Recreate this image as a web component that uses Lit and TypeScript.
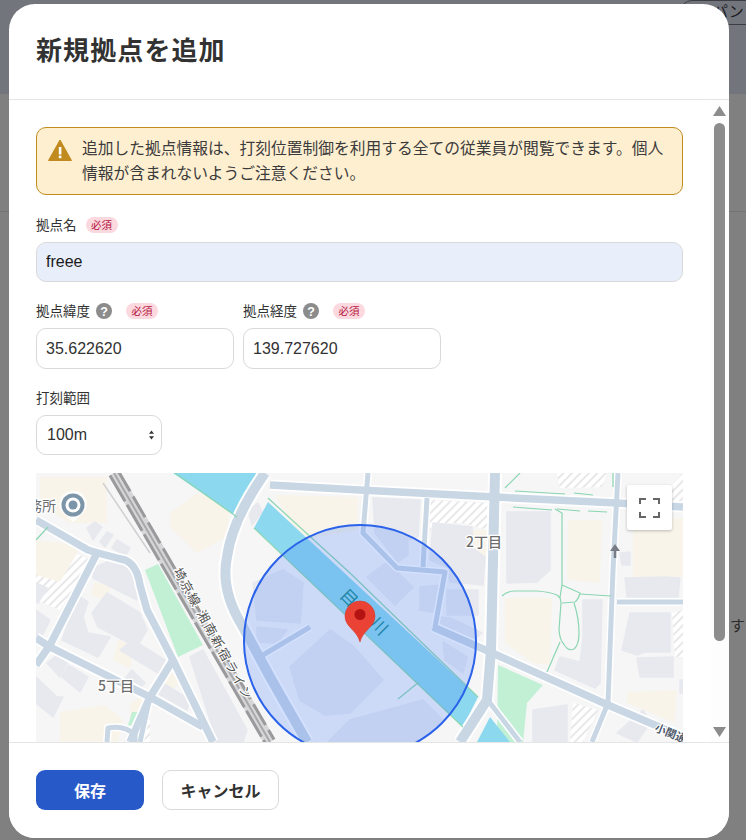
import { LitElement, html, svg, css } from "lit";
import { customElement } from "lit/decorators.js";

const yellow = [
  "40,477 107,477 107,523 70,523 40,505",
  "170,513 197,493 230,503 227,537 197,553 170,527",
  "36,540 82,545 60,582 36,575",
  "60,712 105,705 123,720 118,742 60,742",
  "275,495 358,497 358,530 300,540",
  "568,520 602,520 600,583 567,580",
  "505,598 552,598 550,665 533,663 505,643",
  "633,520 683,518 683,577 633,577",
  "627,692 677,690 675,723 627,703",
  "95,582 112,587 105,600 90,595",
  "118,640 135,645 130,668 113,660",
  "166,665 180,680 170,695 160,680",
  "130,702 147,695 147,712 130,725",
  "470,530 488,530 488,560 470,555",
];
const buildings = [
  "93,568 112,560 135,570 137,600 93,578",
  "92,613 107,593 140,613 147,630 137,647 98,627",
  "62,640 78,595 88,602 83,617 88,633 110,637 98,657",
  "120,650 133,640 165,660 158,673",
  "47,663 57,655 67,663 60,677",
  "62,677 68,665 88,677 80,692",
  "125,678 132,670 145,683 137,692",
  "157,693 163,683 190,700 187,710",
  "36,677 57,697 63,697 53,717 36,703",
  "190,657 203,650 247,730 243,742 217,742",
  "36,610 50,620 40,640 36,637",
  "36,583 47,588 38,603 36,602",
  "87,528 95,522 102,527 93,540",
  "100,542 107,532 113,535 105,547",
  "112,548 117,540 130,548 125,557",
  "248,510 258,503 262,512 252,525",
  "253,583 283,570 303,583 300,623 257,620",
  "257,627 287,630 277,643 257,642",
  "290,667 330,630 352,645 383,680 350,713 325,715 300,700",
  "328,742 350,720 423,700 443,720 417,742",
  "367,577 387,562 413,587 395,605",
  "373,498 420,500 418,537 408,540 408,555 398,562 383,543 375,533",
  "433,523 472,527 473,548 485,557 483,585 450,582 447,567 430,560",
  "447,590 478,590 478,615 447,615",
  "420,587 442,585 437,613 420,610",
  "437,623 438,617 450,618 482,633 470,643",
  "443,642 467,657 463,673 445,660",
  "507,512 550,512 550,570 537,582 507,583",
  "583,600 602,600 600,683 595,688 555,670 560,657 580,662 583,637",
  "630,613 670,613 670,652 645,652 637,655 622,650",
  "637,658 673,657 673,677 640,677",
  "625,578 665,577 680,578 678,597 627,597",
  "620,553 630,552 630,565 622,565",
  "533,710 567,705 567,742 533,742",
  "617,733 643,710 650,723 637,742",
  "680,680 683,680 683,693 680,693",
];
const hatch = [
  "430,500 488,503 488,530 463,523 433,523 430,533",
  "557,473 607,473 602,487 560,488",
  "36,573 50,565 65,548 90,560 60,610 36,600",
  "573,703 598,710 583,742 570,742",
  "130,720 150,710 150,742 130,742",
  "672,613 683,610 683,657 675,657",
  "670,487 683,473 683,503 672,503",
];
const wideRoads = [
  "M265,473 Q232,520 227,557 Q220,590 243,627 L270,677 L307,742",
  "M495,473 L491,650 L487,700 L460,742",
];
const roads = [
  "M270,485 L360,490 L495,497 L617,503 L683,507",
  "M36,520 L88,550 Q97,553 125,560 Q137,565 140,585 L147,610 L173,660 L213,742",
  "M97,553 L50,645 L36,665",
  "M36,638 L50,647 L150,697 L203,727",
  "M173,660 L150,697 L130,742",
  "M433,627 L490,652 L608,705 L683,737",
];
const thinRoads = [
  "M618,473 L613,570 L608,703 L592,742",
  "M368,473 L363,533 L397,568 L445,572 L435,627",
  "M427,498 L423,567",
  "M617,602 L683,602",
  "M490,703 L520,742",
  "M263,655 L310,627",
  "M107,742 L108,728 Q125,725 135,735 L135,742",
  "M150,697 L140,742",
];
const greens = [
  "M505,488 L520,473",
  "M515,491 L565,494 M574,493 L593,495",
  "M513,507 L552,510 M557,509 L580,511 M588,511 L607,512",
  "M555,509 L562,513 L562,585 L560,597 L561,603 L559,630 Q560,640 563,643 Q568,652 574,649 Q579,645 579,633 Q579,618 574,603",
  "M502,596 Q507,591 515,591 L537,591 Q550,592 557,595 L560,598",
  "M562,585 L580,593 Q578,600 575,602 L562,603",
  "M580,594 L611,596",
  "M560,642 L547,672",
  "M350,573 L478,697",
  "M254,528 L463,727",
  "M419,682 L398,699",
  "M175,473 L237,517",
  "M268,498 L350,573",
  "M36,540 L48,527",
  "M613,473 L613,487",
];

@customElement("app-root")
export class AppRoot extends LitElement {
  static styles = css`
    :host {
      display: block;
      position: relative;
      width: 746px;
      height: 840px;
      overflow: hidden;
      background: #808080;
      font-family: "Noto Sans CJK JP", "Liberation Sans", sans-serif;
      color: #323232;
    }
    .bar { height: 94px; background: #73757d; position: relative; }
    .pill {
      position: absolute; right: -30px; top: 0; width: 96px; height: 25px;
      border: 1px solid #3c3d42; border-radius: 12px; box-sizing: border-box;
      font-size: 15px; line-height: 20px; color: #1c1c1e; padding-left: 32px;
      white-space: nowrap;
    }
    .rule { height: 1px; margin-top: 117px; background: #747474; }
    .peek { position: absolute; left: 730px; top: 614px; font-size: 15px; line-height: 22px; color: #2c2c2c; }
    .dialog {
      position: absolute; left: 9px; top: 4px; width: 720px; height: 834px;
      background: #fff; border-radius: 26px; overflow: hidden;
      display: flex; flex-direction: column;
    }
    header {
      height: 95px; flex: none;
      border-bottom: 1px solid #e5e5e5;
      display: flex; align-items: center; padding: 0 27px;
    }
    h1 { margin: 0 0 6px; font-size: 26px; line-height: 36px; font-weight: 700; color: #323232; letter-spacing: 1.1px; }
    .body { flex: 1; min-height: 0; display: flex; }
    .scroll {
      flex: 1; min-width: 0; overflow: hidden;
      padding: 27px 28px 0 27px; display: flex; flex-direction: column;
    }
    .alert {
      flex: none; box-sizing: border-box; height: 68px; background: #ffefd1;
      border: 1px solid #c28b1d; border-radius: 10px;
      display: flex; gap: 10px; padding: 7px 16px 0 11px;
      font-size: 15.75px; line-height: 25px; color: #3b3b3b;
    }
    .alert svg { flex: none; width: 24px; height: 24px; margin-top: 3px; }
    .field { display: flex; flex-direction: column; }
    .label {
      display: flex; align-items: center; box-sizing: border-box; height: 20px; padding-bottom: 2px; margin-bottom: 7px;
      font-size: 13.5px; line-height: 18px; color: #323232;
    }
    .help { width: 16px; height: 16px; margin: 2px 14px 0 6px; flex: none; }
    .req {
      display: inline-block; height: 16px; line-height: 16px; width: 32px; text-align: center; margin-top: 2px;
      border-radius: 8px; background: #fcd8df; color: #b5153e; font-size: 10.5px;
    }
    .label > span.name + .req { margin-left: 9px; }
    .name-field { margin-top: 20px; }
    .row { display: flex; gap: 9px; margin-top: 19px; }
    .range { margin-top: 19px; }
    input, .select {
      box-sizing: border-box; border: 1px solid #d9d9d9; border-radius: 10px;
      font: 16px "Liberation Sans", sans-serif; color: #323232; padding: 0 9px;
      background: #fff; outline: none;
    }
    input.wide { width: 100%; height: 40px; background: #e8effb; color: #1a1a1a; }
    input.num { width: 198px; height: 41px; }
    .select {
      width: 126px; height: 40px; display: flex; align-items: center; justify-content: space-between;
      padding: 0 7px 0 10px;
    }
    .select svg { width: 5px; height: 10px; }
    .map { flex: none; width: 647px; height: 269px; margin-top: 18px; position: relative; overflow: hidden; }
    .map svg.canvas { display: block; width: 647px; height: 269px; }
    .map text { font-family: "Noto Sans CJK JP", sans-serif; }
    .fs {
      position: absolute; left: 591px; top: 12px; width: 45px; height: 45px; background: #fff;
      border-radius: 2px; box-shadow: 0 1px 3px rgba(0,0,0,.25);
      display: flex; align-items: center; justify-content: center;
    }
    .fs svg { width: 21px; height: 20px; }
    .sb {
      flex: none; width: 18px; background: #fdfdfd; display: flex; flex-direction: column; align-items: flex-start;
      padding: 6px 0 0 2px; box-sizing: border-box;
    }
    .sb svg { width: 13px; height: 10px; flex: none; }
    .thumb { width: 11px; height: 518px; flex: none; margin: 7px 0 0 1px; border-radius: 6px; background: #8c8c8c; }
    .sb .down { margin-top: 86px; }
    footer {
      height: 96px; flex: none; box-sizing: border-box; border-top: 1px solid #e5e5e5;
      display: flex; gap: 18px; padding: 27px 27px 0;
      background: #fff;
    }
    button {
      height: 40px; border-radius: 9px; font: 700 16px "Noto Sans CJK JP", sans-serif; box-sizing: border-box; padding: 0;
    }
    .primary { width: 108px; background: #2859c9; color: #fff; border: none; }
    .secondary { width: 117px; background: #fff; color: #323232; border: 1px solid #d9d9d9; }
  `;

  private help() {
    return html`<svg class="help" viewBox="0 0 16 16"><circle cx="8" cy="8" r="8" fill="#8c8c8c"/><text x="8" y="12.5" text-anchor="middle" font-size="12.5" font-weight="700" fill="#fff" font-family="Liberation Sans">?</text></svg>`;
  }

  private mapCanvas() {
    return html`<svg class="canvas" viewBox="36 473 647 269">
      <defs>
        <pattern id="h" width="6" height="6" patternUnits="userSpaceOnUse" patternTransform="rotate(-45)">
          <rect width="6" height="6" fill="#fff"/><rect width="6" height="2" fill="#e8e8ea"/>
        </pattern>
      </defs>
      <rect x="36" y="473" width="647" height="269" fill="#f6f6f7"/>
      ${hatch.map((p) => svg`<polygon points=${p} fill="url(#h)"/>`)}
      ${yellow.map((p) => svg`<polygon points=${p} fill="#f8f4ea"/>`)}
      ${buildings.map((p) => svg`<polygon points=${p} fill="#e8e9ef" stroke="#e8e9ef" stroke-linejoin="round" stroke-width="1.5"/>`)}
      <polygon points="145,570 158,564 203,645 178,657" fill="#c2f0d4"/>
      <polygon points="498,665 543,685 527,703 523,742 497,742" fill="#c2f0d4"/>
      <polygon points="132,712 140,712 135,727 128,725" fill="#c2f0d4"/>
      <polygon points="230,473 257,473 253,488" fill="#a6e6c2"/>
      <polygon points="173,473 256,473 237,517" fill="#8cd9ef"/>
      <polygon points="268,502 478,697 463,727 254,528" fill="#8cd9ef"/>
      <polygon points="490,717 510,742 477,742" fill="#8cd9ef"/>
      ${wideRoads.map((d) => svg`<path d=${d} fill="none" stroke="#fff" stroke-width="14" stroke-linejoin="round"/>`)}
      ${roads.map((d) => svg`<path d=${d} fill="none" stroke="#fff" stroke-width="11" stroke-linejoin="round"/>`)}
      ${thinRoads.map((d) => svg`<path d=${d} fill="none" stroke="#fff" stroke-width="8" stroke-linejoin="round"/>`)}
      ${wideRoads.map((d) => svg`<path d=${d} fill="none" stroke="#c9d7e5" stroke-width="10" stroke-linejoin="round"/>`)}
      ${roads.map((d) => svg`<path d=${d} fill="none" stroke="#c9d7e5" stroke-width="7.5" stroke-linejoin="round"/>`)}
      ${thinRoads.map((d) => svg`<path d=${d} fill="none" stroke="#c9d7e5" stroke-width="5" stroke-linejoin="round"/>`)}
      <path d="M103,483 L150,553" stroke="#d0d0d3" stroke-width="1.5" fill="none"/>
      ${greens.map((d) => svg`<path d=${d} fill="none" stroke="#8ad6b1" stroke-width="1.2"/>`)}
      <path d="M114,473 L270,742" stroke="#d6d6d8" stroke-width="12" fill="none"/>
      <path d="M114,473 L270,742" stroke="#9a9a9c" stroke-width="3" stroke-dasharray="30 4" fill="none" transform="translate(-4,2.4)"/>
      <path d="M114,473 L270,742" stroke="#a8a8aa" stroke-width="2" fill="none"/>
      <path d="M114,473 L270,742" stroke="#9a9a9c" stroke-width="3" stroke-dasharray="24 6" fill="none" transform="translate(4,-2.4)"/>
      <path d="M615,558 V549" stroke="#787d85" stroke-width="2.5" fill="none"/>
      <polygon points="615,544 620,551 610,551" fill="#787d85"/>
      <g font-size="12.5" fill="#4f4f4f" stroke="#fff" stroke-width="2.5" paint-order="stroke">
        <text transform="translate(173,571) rotate(61)" letter-spacing="2">埼京線 湘南新宿ライン</text>
      </g>
      <g font-size="14" font-weight="500" fill="#6e6e6e" stroke="#fff" stroke-width="2.5" paint-order="stroke">
        <text x="466" y="547">2丁目</text>
        <text x="98" y="691">5丁目</text>
        <text x="14" y="511" font-weight="400">事務所</text>
      </g>
      <text transform="translate(654,731) rotate(22)" font-size="11" font-weight="700" fill="#4d5a6b" stroke="#fff" stroke-width="2" paint-order="stroke">小関通り</text>
      <path d="M73,491 a13,13 0 0 1 9,23 L73,522 L64,514 a13,13 0 0 1 9,-23z" fill="#fff" opacity=".85"/>
      <circle cx="73" cy="505" r="11.5" fill="#7c95a8"/>
      <circle cx="73" cy="505" r="7.5" fill="#fff"/>
      <circle cx="73" cy="505" r="4.5" fill="#7c95a8"/>
      <circle cx="360" cy="641" r="116" fill="#3a75fa" fill-opacity=".22" stroke="#2a62ea" stroke-width="2"/>
      <g font-size="17" fill="#1f86a6" text-anchor="middle" dominant-baseline="central">
        <text transform="translate(350,597) rotate(45)">目</text>
        <text transform="translate(380,625) rotate(45)">川</text>
      </g>
      <path d="M360,642 C357,630 345,627 345,616 A15,15 0 0 1 375,616 C375,627 363,630 360,642 Z" fill="#ea4335" stroke="#d33a2c" stroke-width=".6"/>
      <circle cx="360" cy="614.5" r="5.5" fill="#b31412"/>
    </svg>`;
  }

  render() {
    return html`
      <div class="bar"><div class="pill">パン</div></div>
      <div class="rule"></div>
      <div class="peek">す</div>
      <div class="dialog">
        <header><h1>新規拠点を追加</h1></header>
        <div class="body">
          <div class="scroll">
            <div class="alert">
              <svg viewBox="0 0 24 24"><path d="M12 2 L23.5 22.5 H.5 Z" fill="#c08a1e" stroke="#c08a1e" stroke-linejoin="round"/><rect x="10.8" y="9" width="2.6" height="7.5" fill="#fff"/><rect x="10.8" y="17.6" width="2.6" height="2.6" fill="#fff"/></svg>
              <div>追加した拠点情報は、打刻位置制御を利用する全ての従業員が閲覧できます。個人情報が含まれないようご注意ください。</div>
            </div>
            <div class="field name-field">
              <div class="label"><span class="name">拠点名</span><span class="req">必須</span></div>
              <input class="wide" value="freee" />
            </div>
            <div class="row">
              <div class="field">
                <div class="label"><span>拠点緯度</span>${this.help()}<span class="req">必須</span></div>
                <input class="num" value="35.622620" />
              </div>
              <div class="field">
                <div class="label"><span>拠点経度</span>${this.help()}<span class="req">必須</span></div>
                <input class="num" value="139.727620" />
              </div>
            </div>
            <div class="field range">
              <div class="label"><span>打刻範囲</span></div>
              <div class="select"><span>100m</span><svg viewBox="0 0 6 11"><path d="M3 0 L6 4 H0 Z M3 11 L0 7 H6 Z" fill="#333"/></svg></div>
            </div>
            <div class="map">
              ${this.mapCanvas()}
              <div class="fs"><svg viewBox="0 0 21 20"><path d="M1 6 V1 H7 M14 1 H20 V6 M20 14 V19 H14 M7 19 H1 V14" fill="none" stroke="#666" stroke-width="2"/></svg></div>
            </div>
          </div>
          <div class="sb">
            <svg viewBox="0 0 13 10"><path d="M6.5 0 L13 10 H0 Z" fill="#8c8c8c"/></svg>
            <div class="thumb"></div>
            <svg class="down" viewBox="0 0 13 10"><path d="M6.5 10 L0 0 H13 Z" fill="#8c8c8c"/></svg>
          </div>
        </div>
        <footer>
          <button class="primary">保存</button>
          <button class="secondary">キャンセル</button>
        </footer>
      </div>
    `;
  }
}
